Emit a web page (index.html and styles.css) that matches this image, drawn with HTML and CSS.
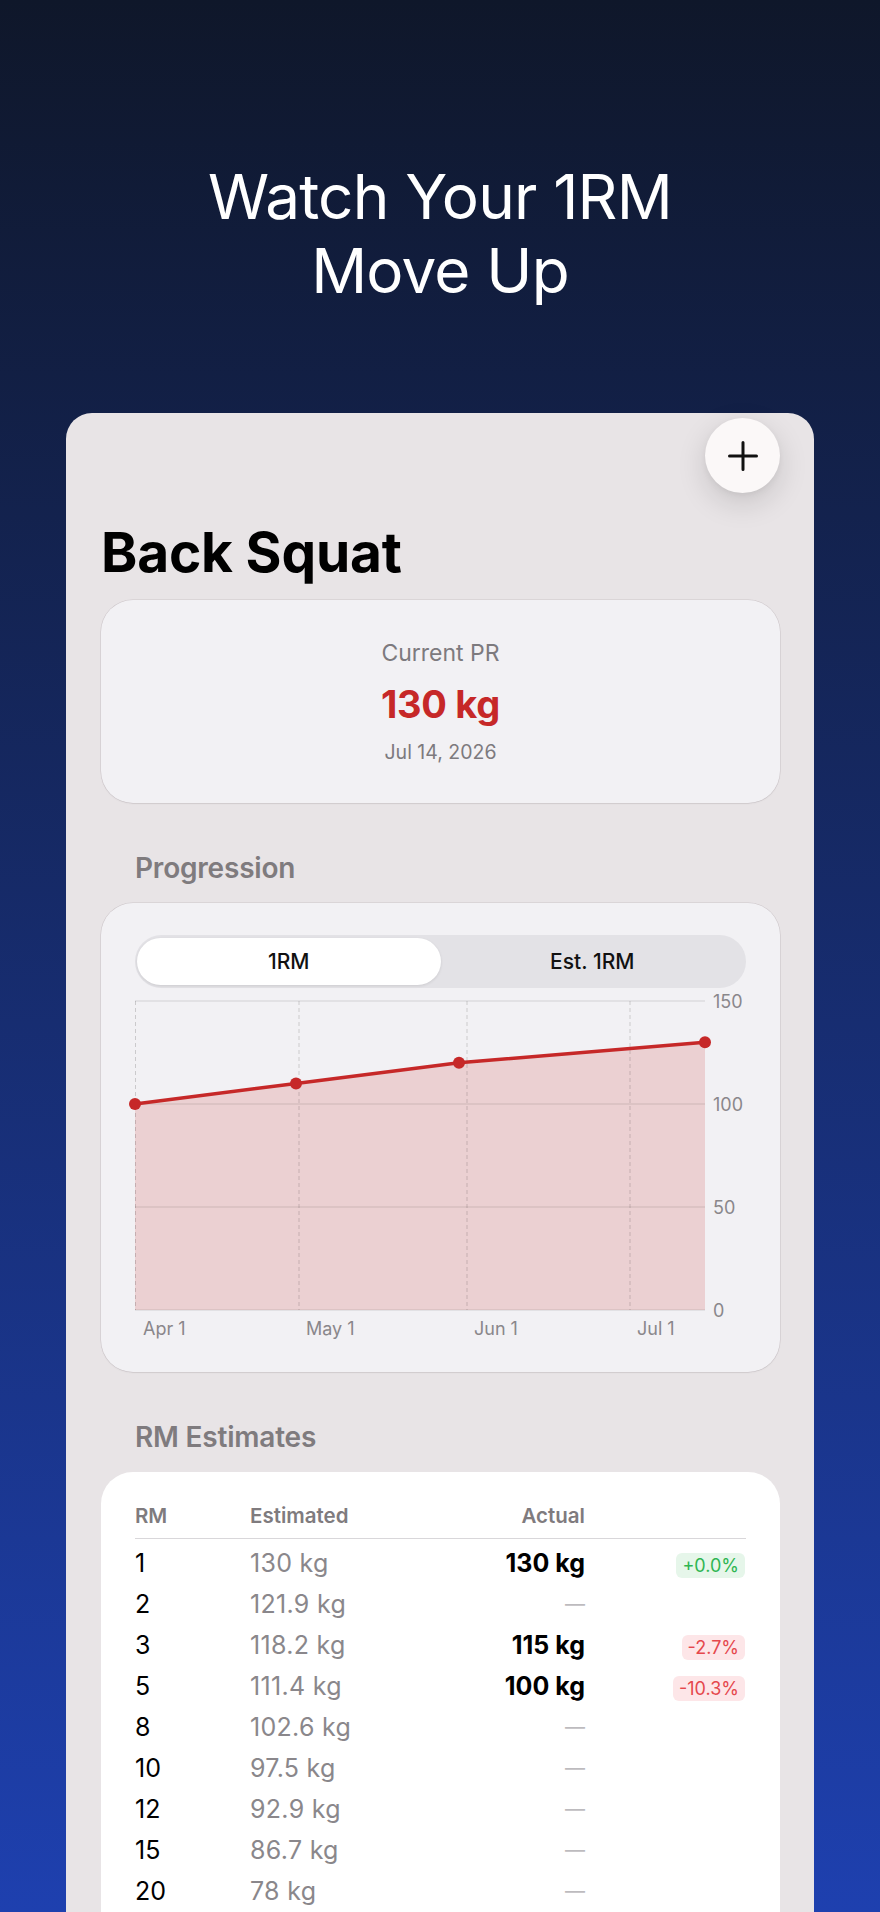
FILE: index.html
```html
<!DOCTYPE html>
<html lang="en">
<head>
<meta charset="utf-8">
<title>Watch Your 1RM Move Up</title>
<link rel="stylesheet" href="styles.css">
</head>
<body>
<div class="page">
  <h1 class="hero">Watch Your 1RM<br>Move Up</h1>

  <div class="phone">
    <div class="toolbar">
      <button class="add-btn" aria-label="Add">
        <svg width="30" height="30" viewBox="0 0 30 30"><path d="M15 1.5V28.5M1.5 15H28.5" stroke="#111" stroke-width="3" stroke-linecap="round"/></svg>
      </button>
    </div>

    <h2 class="title">Back Squat</h2>

    <section class="pr-card">
      <div class="pr-label">Current PR</div>
      <div class="pr-value">130 kg</div>
      <div class="pr-date">Jul 14, 2026</div>
    </section>

    <h3 class="section-head">Progression</h3>

    <section class="chart-card">
      <div class="segmented">
        <div class="seg seg-active">1RM</div>
        <div class="seg">Est. 1RM</div>
      </div>
      <svg class="chart" width="610" height="355" viewBox="0 0 610 355">
        <polygon points="0,114 161,93.4 324,72.8 570,52.2 570,320 0,320" fill="rgba(198,40,40,0.16)"/>
        <g stroke="rgba(0,0,0,0.13)" stroke-width="1">
          <line x1="0" y1="11" x2="570" y2="11"/>
          <line x1="0" y1="114" x2="570" y2="114"/>
          <line x1="0" y1="217" x2="570" y2="217"/>
          <line x1="0" y1="320" x2="570" y2="320"/>
        </g>
        <g stroke="rgba(0,0,0,0.16)" stroke-width="1" stroke-dasharray="4 3">
          <line x1="0.5" y1="11" x2="0.5" y2="320"/>
          <line x1="164" y1="11" x2="164" y2="320"/>
          <line x1="332" y1="11" x2="332" y2="320"/>
          <line x1="495" y1="11" x2="495" y2="320"/>
        </g>
        <polyline points="0,114 161,93.4 324,72.8 570,52.2" fill="none" stroke="#c62828" stroke-width="3.5" stroke-linejoin="round"/>
        <g fill="#c62828">
          <circle cx="0" cy="114" r="6"/>
          <circle cx="161" cy="93.4" r="6"/>
          <circle cx="324" cy="72.8" r="6"/>
          <circle cx="570" cy="52.2" r="6"/>
        </g>
        <g class="axis-y">
          <text x="578" y="17.5">150</text>
          <text x="578" y="120.5">100</text>
          <text x="578" y="223.5">50</text>
          <text x="578" y="326.5">0</text>
        </g>
        <g class="axis-x">
          <text x="8" y="345">Apr 1</text>
          <text x="171" y="345">May 1</text>
          <text x="339" y="345">Jun 1</text>
          <text x="502" y="345">Jul 1</text>
        </g>
      </svg>
    </section>

    <h3 class="section-head">RM Estimates</h3>

    <section class="rm-card">
      <div class="rm-row rm-header">
        <span>RM</span><span>Estimated</span><span class="r">Actual</span><span></span>
      </div>
      <div class="rm-divider"></div>
      <div class="rm-row"><span class="rm">1</span><span class="est">130 kg</span><span class="act">130 kg</span><span class="r"><span class="badge up">+0.0%</span></span></div>
      <div class="rm-row"><span class="rm">2</span><span class="est">121.9 kg</span><span class="dash">—</span><span></span></div>
      <div class="rm-row"><span class="rm">3</span><span class="est">118.2 kg</span><span class="act">115 kg</span><span class="r"><span class="badge down">-2.7%</span></span></div>
      <div class="rm-row"><span class="rm">5</span><span class="est">111.4 kg</span><span class="act">100 kg</span><span class="r"><span class="badge down">-10.3%</span></span></div>
      <div class="rm-row"><span class="rm">8</span><span class="est">102.6 kg</span><span class="dash">—</span><span></span></div>
      <div class="rm-row"><span class="rm">10</span><span class="est">97.5 kg</span><span class="dash">—</span><span></span></div>
      <div class="rm-row"><span class="rm">12</span><span class="est">92.9 kg</span><span class="dash">—</span><span></span></div>
      <div class="rm-row"><span class="rm">15</span><span class="est">86.7 kg</span><span class="dash">—</span><span></span></div>
      <div class="rm-row"><span class="rm">20</span><span class="est">78 kg</span><span class="dash">—</span><span></span></div>
    </section>
  </div>
</div>
</body>
</html>
```

FILE: styles.css
```css
* { box-sizing: border-box; }
html, body { margin: 0; padding: 0; }
body {
  width: 880px;
  height: 1912px;
  overflow: hidden;
  font-family: Inter, "Liberation Sans", sans-serif;
  background: linear-gradient(to bottom, #0f172a 0%, #1e40af 100%);
}
.page {
  display: flex;
  flex-direction: column;
  align-items: center;
}
.hero {
  margin: 160px 0 0;
  font-size: 62px;
  line-height: 74px;
  font-weight: 400;
  letter-spacing: -0.8px;
  color: #ffffff;
  text-align: center;
}
.phone {
  margin-top: 105px;
  width: 748px;
  min-height: 1600px;
  background: #e8e4e6;
  border-radius: 26px 26px 0 0;
  padding: 5px 34px 0 35px;
  display: flex;
  flex-direction: column;
}
.toolbar {
  display: flex;
  justify-content: flex-end;
}
.add-btn {
  width: 75px;
  height: 75px;
  border-radius: 50%;
  border: none;
  background: #fbf8f8;
  box-shadow: 0 10px 30px rgba(0, 0, 0, 0.14), 0 2px 6px rgba(0, 0, 0, 0.05);
  display: flex;
  align-items: center;
  justify-content: center;
  padding: 0;
}
.title {
  margin: 27px 0 0;
  font-size: 55px;
  line-height: 65px;
  font-weight: 700;
  letter-spacing: -0.2px;
  color: #000;
}
.pr-card {
  margin-top: 15px;
  height: 203px;
  background: #f2f1f4;
  border-radius: 32px;
  box-shadow: 0 0 0 0.5px rgba(110, 90, 100, 0.22), 0 1px 2px rgba(0, 0, 0, 0.05);
  display: flex;
  flex-direction: column;
  align-items: center;
  padding-top: 40px;
}
.pr-label {
  font-size: 23px;
  line-height: 27px;
  color: #7d7a7e;
}
.pr-value {
  margin-top: 14px;
  font-size: 38px;
  line-height: 46px;
  font-weight: 700;
  color: #c62828;
  letter-spacing: -0.3px;
}
.pr-date {
  margin-top: 13px;
  font-size: 19.5px;
  line-height: 24px;
  color: #7d7a7e;
}
.section-head {
  margin: 49px 0 0 34px;
  font-size: 28px;
  line-height: 33px;
  font-weight: 600;
  color: #7f7b7e;
  letter-spacing: -0.2px;
}
.chart-card {
  margin-top: 18px;
  background: #f2f1f4;
  border-radius: 32px;
  box-shadow: 0 0 0 0.5px rgba(110, 90, 100, 0.22), 0 1px 2px rgba(0, 0, 0, 0.05);
  padding: 32px 34px 27px;
}
.segmented {
  height: 53px;
  border-radius: 27px;
  background: #e3e2e6;
  padding: 3px 2px;
  display: flex;
}
.seg {
  flex: 1;
  display: flex;
  align-items: center;
  justify-content: center;
  font-size: 21px;
  font-weight: 500;
  color: #111;
  border-radius: 24px;
}
.seg-active {
  background: #ffffff;
  box-shadow: 0 1px 3px rgba(0, 0, 0, 0.1);
}
.chart {
  display: block;
  margin-top: 2px;
  overflow: visible;
}
.axis-y text, .axis-x text {
  font-family: Inter, "Liberation Sans", sans-serif;
  font-size: 18px;
  fill: #8a878b;
}
.rm-card {
  margin-top: 18px;
  background: #ffffff;
  border-radius: 32px;
  padding: 32px 33px 40px 34px;
  flex: 1;
}
.rm-row {
  display: grid;
  grid-template-columns: 115px 185px 150px 160px;
  align-items: center;
  font-size: 25px;
  line-height: 41px;
  color: #000;
}
.rm-row .est { letter-spacing: 0.3px; }
.rm-header {
  font-size: 20.5px;
  line-height: 24px;
  font-weight: 600;
  color: #7f7b7e;
  padding-bottom: 10px;
}
.rm-divider {
  height: 1px;
  background: #d9d7da;
  margin-bottom: 4px;
  width: 611px;
}
.r { text-align: right; }
.est { color: #8a878b; }
.act { text-align: right; font-weight: 700; }
.dash { text-align: right; color: #bdbbbe; font-size: 20px; }
.badge {
  display: inline-block;
  height: 25px;
  line-height: 25px;
  padding: 0 6px;
  border-radius: 6px;
  font-size: 18px;
  vertical-align: middle;
}
.badge.up { color: #2fb552; background: #e6f6ea; }
.badge.down { color: #e5484d; background: #fde6e8; }
```
